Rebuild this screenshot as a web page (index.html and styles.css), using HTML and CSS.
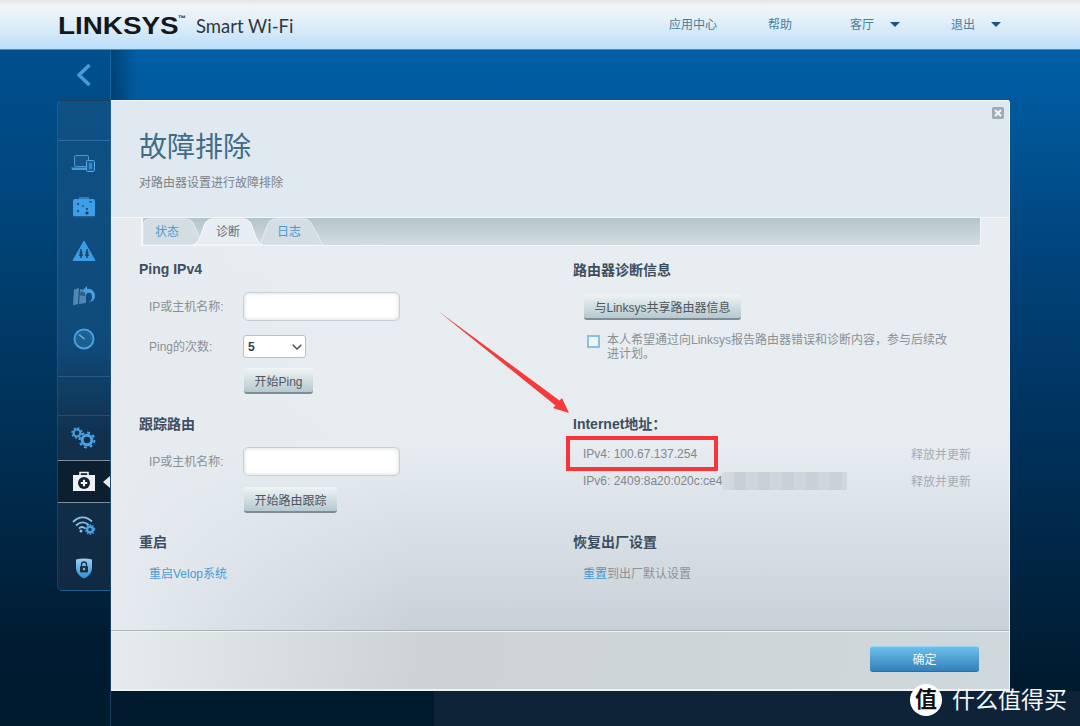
FILE: index.html
```html
<!DOCTYPE html>
<html lang="zh-CN">
<head>
<meta charset="utf-8">
<title>Linksys Smart Wi-Fi</title>
<link rel="stylesheet" href="styles.css">
</head>
<body>
<div class="page">
  <header class="topbar">
    <div class="logo"><span class="logo-mark">LINKSYS</span><span class="logo-tm">™</span><span class="logo-sub">Smart Wi-Fi</span></div>
    <nav class="topnav">
      <span class="topnav-item">应用中心</span>
      <span class="topnav-item">帮助</span>
      <span class="topnav-item topnav-user">客厅<i class="caret"></i></span>
      <span class="topnav-item">退出<i class="caret"></i></span>
    </nav>
  </header>
  <div class="main">
    <aside class="sidebar">
      <div class="back">
        <svg width="14" height="22" viewBox="0 0 14 22"><path d="M12.5 1 2 11l10.500 10" fill="none" stroke="#4b9ad2" stroke-width="3.600"/></svg>
      </div>
      <div class="panel">
        <div class="panel-gap"></div>
        <div class="panel-group">
          <div class="nav-icon">
            <svg width="26" height="18" viewBox="0 0 26 18"><rect x="3.500" y="1.500" width="14" height="11" rx="1" fill="#17568a" stroke="#4a9ad6"/><path d="M0 13.500h17v2.500H1.500z" fill="#4a9ad6"/><rect x="15.500" y="6.500" width="8" height="11" rx="1" fill="#1c5f96" stroke="#55a5e0"/><rect x="18" y="9" width="3" height="6" fill="#3c8bc8"/></svg>
          </div>
          <div class="nav-icon">
            <svg width="24" height="22" viewBox="0 0 24 22"><path d="M7 3V1h10v2" fill="#2e7fbd"/><rect x="1" y="3" width="22" height="18" rx="2" fill="#3f9fe6"/><rect x="1" y="20" width="22" height="1.500" fill="#1e5f94"/><circle cx="6" cy="8" r="1.300" fill="#1d5f92"/><circle cx="11" cy="10" r="1" fill="#1d5f92"/><circle cx="6" cy="15" r="1.300" fill="#1d5f92"/><circle cx="15" cy="13" r="1.100" fill="#123f66"/><circle cx="15" cy="17" r="1.600" fill="#0e3050"/><rect x="17" y="5" width="3" height="1.500" fill="#1d5f92"/></svg>
          </div>
          <div class="nav-icon">
            <svg width="24" height="22" viewBox="0 0 24 22"><path d="M12 1 23 20.500H1z" fill="#3d9ce2" stroke="#3d9ce2" stroke-linejoin="round"/><path d="M9 9v9M15 9v9M7.500 12.500h3M13.500 12.500h3M7 15h4M13 15h4" stroke="#113f66" stroke-width="1.400" fill="none"/></svg>
          </div>
          <div class="nav-icon">
            <svg width="24" height="24" viewBox="0 0 24 24"><path d="M2 6.500 7 5 6 21 1 22.500zM8 6l6 1.500V20l-7 1z" fill="#4f87b0"/><path d="M8.500 8.500 13 9.500v3.500l-5-.5z" fill="#26618f"/><path d="M14 12c3-1 5 0 5 4 0 2-1 4-3 5 4-.5 6-3 6-6 0-5-4-8-8-7V5l-4 4 4 5z" fill="#4a9ede" transform="translate(1 -2)"/></svg>
          </div>
          <div class="nav-icon">
            <svg width="22" height="22" viewBox="0 0 22 22"><circle cx="11" cy="11" r="9.500" fill="#1c5f93" stroke="#4b9fe0" stroke-width="2"/><path d="M6 6.500 11.500 11" stroke="#6db5ea" stroke-width="1.600"/><path d="M4.500 11a6.500 6.500 0 0 1 13 0" fill="none" stroke="#2f7cb6" stroke-dasharray="1.500 1.500"/></svg>
          </div>
        </div>
        <div class="panel-spacer"></div>
        <div class="nav-icon">
          <svg width="26" height="22" viewBox="0 0 26 22"><circle cx="6" cy="6" r="3.400" fill="none" stroke="#4aa1e4" stroke-width="2"/><circle cx="6" cy="6" r="5" fill="none" stroke="#4aa1e4" stroke-width="1.600" stroke-dasharray="2 1.900"/><circle cx="16" cy="13" r="4.800" fill="none" stroke="#4aa1e4" stroke-width="3"/><circle cx="16" cy="13" r="7.400" fill="none" stroke="#4aa1e4" stroke-width="2" stroke-dasharray="2.900 2.900"/></svg>
        </div>
        <div class="nav-icon nav-icon-active">
          <svg width="24" height="21" viewBox="0 0 24 21"><path d="M8 4V1.500h8V4" fill="none" stroke="#eef1f3" stroke-width="1.600"/><rect x="1" y="4" width="22" height="16" fill="#eef1f3"/><circle cx="12" cy="12" r="6" fill="#14202c"/><path d="M12 8.800v6.400M8.800 12h6.400" stroke="#eef1f3" stroke-width="2.200"/></svg>
        </div>
        <div class="nav-icon">
          <svg width="24" height="20" viewBox="0 0 24 20"><path d="M1 7c6-6 13-6 19-.5M4 10.500c4-4 9-4 12.500-.5M7 13.500c2-2 4-2 6 0" fill="none" stroke="#8cc0e6" stroke-width="1.800"/><circle cx="9" cy="16" r="1.500" fill="#8cc0e6"/><circle cx="18" cy="14.500" r="3" fill="#133b5c" stroke="#4aa1e4" stroke-width="2.400"/><circle cx="18" cy="14.500" r="4.700" fill="none" stroke="#4aa1e4" stroke-width="1.200" stroke-dasharray="1.500 1.500"/></svg>
        </div>
        <div class="nav-icon">
          <svg width="18" height="22" viewBox="0 0 18 22"><defs><linearGradient id="sh" x1="0" y1="0" x2="0" y2="1"><stop offset="0" stop-color="#9bd0f5"/><stop offset="1" stop-color="#2e8fdc"/></linearGradient></defs><path d="M1 2.500C6 1 12 1 17 2.500V11c0 5-4 9-8 10.500C5 20 1 16 1 11z" fill="url(#sh)"/><path d="M6.500 9V7.500a2.500 2.500 0 0 1 5 0V9" fill="none" stroke="#1b3247" stroke-width="1.300"/><rect x="5" y="9" width="8" height="6.500" rx="1" fill="#1b3247"/><circle cx="9" cy="12" r="1.200" fill="#7db8e4"/></svg>
        </div>
      </div>
    </aside>
    <div class="content">
      <section class="modal">
        <button class="close" type="button" aria-label="关闭">
          <svg width="12" height="12" viewBox="0 0 12 12"><rect width="12" height="12" rx="1.500" fill="#9cadb8"/><path d="M3 3l6 6M9 3l-6 6" stroke="#f1f5f7" stroke-width="2.200"/></svg>
        </button>
        <div class="modal-head">
          <h1 class="title">故障排除</h1>
          <p class="subtitle">对路由器设置进行故障排除</p>
        </div>
        <div class="modal-body">
          <div class="tabs">
            <div class="tab tab-first">
              <svg class="tab-shape" width="62" height="27" viewBox="0 0 62 27"><path d="M0 27V8q0-7 7-7h36q6 0 8 6l9 20z" fill="#d3dee3" stroke="#e6edf0"/></svg>
              <span class="tab-label">状态</span>
            </div>
            <div class="tab tab-second">
              <svg class="tab-shape" width="71" height="27" viewBox="0 0 71 27"><path d="M0 27C6 25 8 17 11 8q2-7 9-7h30q7 0 9 7c3 9 5 17 11 19z" fill="#e7edf1" stroke="#fafcfd"/></svg>
              <span class="tab-label tab-label-active">诊断</span>
            </div>
            <div class="tab tab-third">
              <svg class="tab-shape" width="66" height="27" viewBox="0 0 66 27"><path d="M1 27 8 8q2-7 9-7h28q6 0 8 6l11 20z" fill="#d3dee3" stroke="#e6edf0"/></svg>
              <span class="tab-label">日志</span>
            </div>
          </div>
          <div class="columns">
            <div class="block block-ping">
              <h2 class="heading">Ping IPv4</h2>
              <div class="field field-first"><label class="field-label">IP或主机名称:</label><input class="text-input" type="text"></div>
              <div class="field field-next"><label class="field-label">Ping的次数:</label>
                <span class="select-wrap"><select class="count"><option>5</option></select><svg class="select-chevron" width="10" height="6" viewBox="0 0 10 6"><path d="M.7.7 5 5 9.300.7" fill="none" stroke="#3a4650" stroke-width="1.300"/></svg></span>
              </div>
              <div class="actions actions-tight"><button class="btn" type="button">开始Ping</button></div>
            </div>
            <div class="block block-ping block-right">
              <h2 class="heading heading-right">路由器诊断信息</h2>
              <button class="btn btn-share" type="button">与Linksys共享路由器信息</button>
              <div class="consent"><span class="checkbox"></span><p class="consent-text">本人希望通过向Linksys报告路由器错误和诊断内容，参与后续改进计划。</p></div>
            </div>
            <div class="block block-trace">
              <h2 class="heading">跟踪路由</h2>
              <div class="field field-first"><label class="field-label">IP或主机名称:</label><input class="text-input" type="text"></div>
              <div class="actions"><button class="btn" type="button">开始路由跟踪</button></div>
            </div>
            <div class="block block-trace block-right">
              <h2 class="heading">Internet地址：</h2>
              <div class="ips">
                <div class="ip-row"><span>IPv4: 100.67.137.254</span><span class="renew">释放并更新</span></div>
                <div class="ip-row"><span class="ip-v6"><span>IPv6: 2409:8a20:020c:ce4</span><i class="mosaic"></i></span><span class="renew">释放并更新</span></div>
                <div class="highlight"></div>
              </div>
            </div>
            <div class="block">
              <h2 class="heading">重启</h2>
              <p class="line"><a class="link">重启Velop系统</a></p>
            </div>
            <div class="block block-right">
              <h2 class="heading">恢复出厂设置</h2>
              <p class="line"><a class="link">重置</a>到出厂默认设置</p>
            </div>
          </div>
        </div>
        <div class="modal-foot"><button class="btn-primary" type="button">确定</button></div>
      </section>
      <div class="bottom-strip"></div>
    </div>
  </div>
  <svg class="arrow" width="140" height="110" viewBox="0 0 140 110"><path d="M0 0 121.500 89.500 124 87 131 102 115 97 117.500 94.500z" fill="#f43a3a"/></svg>
  <div class="watermark"><span class="wm-badge">值</span><span class="wm-text">什么值得买</span></div>
</div>
</body>
</html>
```
FILE: styles.css
```css
* { box-sizing: border-box; }
html, body { margin: 0; padding: 0; }
body {
  width: 1080px;
  height: 726px;
  overflow: hidden;
  background: #001a2e;
  font-family: "Liberation Sans", "Noto Sans CJK SC", sans-serif;
  font-size: 12px;
  color: #8b9095;
}
.page { position: relative; width: 1080px; height: 726px; display: flex; flex-direction: column; }

/* top bar */
.topbar {
  height: 50px;
  flex: none;
  display: flex;
  align-items: center;
  padding: 0 79px 0 58px;
  background: linear-gradient(180deg, #e4e6e7 0, #f1f5f8 6px, #e2eff8 22px, #bcdffa 48px);
  border-bottom: 1px solid #4a8fc2;
}
.logo { display: flex; align-items: center; height: 50px; color: #15181b; }
.logo-mark {
  display: inline-block;
  width: 120px;
  font-weight: 700;
  font-size: 24px;
  transform: scaleX(1.16);
  transform-origin: left center;
  margin-top: 3px;
}
.logo-tm { font-size: 8px; margin: -12px 0 0 0; width: 18px; font-weight: 700; }
.logo-sub { font-family: Lato, "Liberation Sans", sans-serif; font-size: 18.5px; color: #30383e; margin-top: 3px; }
.topnav { margin-left: auto; display: flex; gap: 51px; align-items: center; margin-top: -2px; }
.topnav-item { color: #4a7d9e; font-size: 12px; display: flex; align-items: center; }
.topnav-user { margin-left: 7px; }
.caret { width: 0; height: 0; margin-left: 16px; margin-top: 2px; border-style: solid; border-width: 5px 5px 0; border-color: #1f5681 transparent transparent; }

/* layout */
.main { flex: 1; display: flex; min-height: 0; }
.sidebar {
  width: 111px;
  flex: none;
  padding-left: 57px;
  display: flex;
  flex-direction: column;
  border-right: 1px solid rgba(90, 150, 200, .3);
  background: linear-gradient(180deg, #004f8f 0, #00487f 130px, #001c33 590px, #001a2e 100%);
}
.back { height: 50px; flex: none; display: flex; align-items: center; justify-content: center; margin-right: -1px; }
.panel {
  height: 491px;
  background: linear-gradient(180deg, #0e5184 0, #0f4a7a 240px, #11304c 340px, #102a42 100%);
  border: 1px solid rgba(120, 170, 210, .16);
  border-right: 0;
  border-radius: 5px 0 0 5px;
  display: flex;
  flex-direction: column;
}
.panel-gap { height: 40px; flex: none; border-bottom: 1px solid rgba(130, 180, 220, .3); }
.panel-group { flex: none; }
.panel-spacer { height: 40px; flex: none; margin-top: 15px; border-top: 1px solid rgba(130, 180, 220, .2); border-bottom: 1px solid rgba(130, 180, 220, .2); }
.nav-icon { position: relative; height: 44px; display: flex; align-items: center; justify-content: center; }
.nav-icon-active { background: #0b1f31; border-top: 1px solid #7f8f9c; border-bottom: 1px solid #7f8f9c; }
.nav-icon-active::after {
  content: "";
  position: absolute;
  right: 0;
  top: 15px;
  border-style: solid;
  border-width: 6px 7px 6px 0;
  border-color: transparent #e6ecf0 transparent transparent;
}
.content {
  flex: 1;
  display: flex;
  flex-direction: column;
  padding-top: 50px;
  min-width: 0;
  background:
    linear-gradient(90deg, rgba(0, 25, 50, .4), rgba(0, 25, 50, 0) 26px),
    linear-gradient(180deg, #005fa6 0, #005a9d 50px, #00437a 210px, #00284a 480px, #001a2e 640px);
}
.modal {
  position: relative;
  width: 899px;
  height: 591px;
  flex: none;
  display: flex;
  flex-direction: column;
  border-radius: 3px 3px 0 0;
  border-right: 1px solid #f4f7f9;
}
.close { position: absolute; top: 7px; right: 5px; padding: 0; border: 0; background: none; line-height: 0; }
.modal-head {
  height: 118px;
  flex: none;
  padding: 29px 0 0 28px;
  background: #e0e9ef;
  border-top: 1px solid #eef3f6;
  border-bottom: 1px solid #f5f8fa;
}
.title { margin: -1px 0 0; font-size: 28px; line-height: 38px; font-weight: 400; color: #3f6c89; }
.subtitle { margin: 7px 0 0; font-size: 12px; line-height: 18px; color: #7b8186; }
.modal-body {
  height: 413px;
  flex: none;
  border-bottom: 1px solid #a9b0b7;
  background:
    linear-gradient(90deg, #e5ebef 0, rgba(229, 235, 239, 0) 300px),
    linear-gradient(180deg, #e7edf1 0, #e6ecf0 55%, #c9d1d8 100%);
}
.tabs {
  height: 28px;
  margin: 0 28px 0 30px;
  display: flex;
  border-left: 2px solid #f4f7f9;
  border-bottom: 1px solid #f4f7f9;
  border-right: 1px solid #f4f7f9;
  background: linear-gradient(180deg, #b2c5cb, #d2dde2);
}
.tab { position: relative; height: 27px; display: flex; align-items: center; }
.tab-first { width: 50px; z-index: 1; }
.tab-second { width: 66px; z-index: 3; }
.tab-third { width: 66px; z-index: 2; }
.tab-shape { position: absolute; left: 0; top: 0; }
.tab-label { position: relative; color: #4a9ad4; font-size: 12px; margin-top: -2px; }
.tab-first .tab-label { margin-left: 12px; }
.tab-second .tab-label { margin-left: 23px; }
.tab-third .tab-label { margin-left: 18px; }
.tab-label-active { color: #666d72; }
.columns {
  display: grid;
  grid-template-columns: 434px 1fr;
  grid-template-rows: 155px 118px auto;
  padding: 14px 0 0 28px;
}
.heading { margin: 0; font-size: 14px; line-height: 18px; font-weight: 700; color: #3b4f60; }
.heading-right { margin-top: 1px; }
.field { display: flex; align-items: center; padding-left: 10px; }
.field-first { margin-top: 14px; }
.field-next { margin-top: 14px; }
.field-label { width: 94px; flex: none; color: #8b9095; margin-top: -2px; }
.text-input {
  width: 157px;
  height: 29px;
  border: 1px solid #c6d0d7;
  border-radius: 5px;
  background: #fff;
  box-shadow: inset 0 0 4px rgba(120, 140, 155, .35);
  outline: 0;
}
.select-wrap { position: relative; display: block; width: 63px; height: 23px; }
.count {
  appearance: none;
  display: block;
  width: 63px;
  height: 23px;
  padding-left: 4px;
  border: 1px solid #b7c1c8;
  border-radius: 3px;
  background-color: #fff;
  color: #33424f;
  font: 700 12px "Liberation Sans", sans-serif;
}
.select-chevron { position: absolute; right: 4px; top: 9px; }
.actions { margin: 11px 0 0 105px; }
.actions-tight { margin-top: 10px; }
.btn {
  height: 26px;
  padding: 0 10.5px;
  border: 0;
  border-bottom: 2px solid #7f8c91;
  border-radius: 3px;
  background: linear-gradient(180deg, #f0f4f5, #b4c9d0);
  color: #50575c;
  font: 12px "Liberation Sans", "Noto Sans CJK SC", sans-serif;
}
.btn-share { display: block; margin: 15px 0 0 11px; }
.consent { display: flex; gap: 7px; margin: 13px 0 0 14px; width: 374px; }
.checkbox { width: 13px; height: 13px; flex: none; margin-top: 2px; border: 2px solid #86c1e3; background: #eef4f8; }
.consent-text { margin: 0; width: 345px; flex: none; line-height: 14px; color: #8b9095; }
.ips { position: relative; margin: 7px 0 0 10px; width: 388px; }
.ip-row { height: 27px; display: flex; align-items: center; justify-content: space-between; color: #82878c; }
.ip-v6 { display: flex; align-items: center; }
.mosaic {
  width: 125px;
  height: 18px;
  border-radius: 2px;
  background:
    repeating-linear-gradient(90deg, rgba(255, 255, 255, .05) 0 12px, rgba(120, 135, 150, .04) 12px 24px),
    linear-gradient(90deg, #d3dae0, #cbd2d9 12%, #cdd4db 100%);
}
.renew { color: #a6abb0; }
.highlight { position: absolute; left: -17px; top: -4px; width: 152px; height: 35px; border: 4px solid #f7343a; }
.line { margin: 14px 0 0 10px; line-height: 18px; color: #8e9398; }
.link { color: #4a9ad4; }
.modal-foot {
  flex: 1;
  display: flex;
  align-items: flex-start;
  justify-content: flex-end;
  padding: 14px 30px 0 0;
  border-top: 1px solid #f0f3f5;
  border-bottom: 2px solid #eef1f3;
  background: linear-gradient(100deg, #e6ebee 0, #cdd2d5 35%, #cfd8dc 100%);
}
.btn-primary {
  width: 109px;
  height: 26px;
  padding: 0 0 2px;
  border: 0;
  border-radius: 3px;
  border-top: 1px solid #8fd5f5;
  border-bottom: 1px solid #2c6d9e;
  background: linear-gradient(180deg, #6cbfea, #3380bb);
  color: #f3f9fd;
  font: 12px "Liberation Sans", "Noto Sans CJK SC", sans-serif;
}
.bottom-strip { flex: 1; margin-left: 323px; background: #0e2338; }

/* overlays */
.arrow { position: absolute; left: 438px; top: 311px; }
.watermark { position: absolute; left: 910px; top: 684px; display: flex; align-items: center; gap: 10px; }
.wm-badge {
  width: 32px;
  height: 32px;
  border-radius: 50%;
  background: #fff;
  color: #111;
  font-size: 22px;
  font-weight: 700;
  line-height: 32px;
  text-align: center;
}
.wm-text { color: #f4f6f7; font-size: 23px; line-height: 32px; }
```
